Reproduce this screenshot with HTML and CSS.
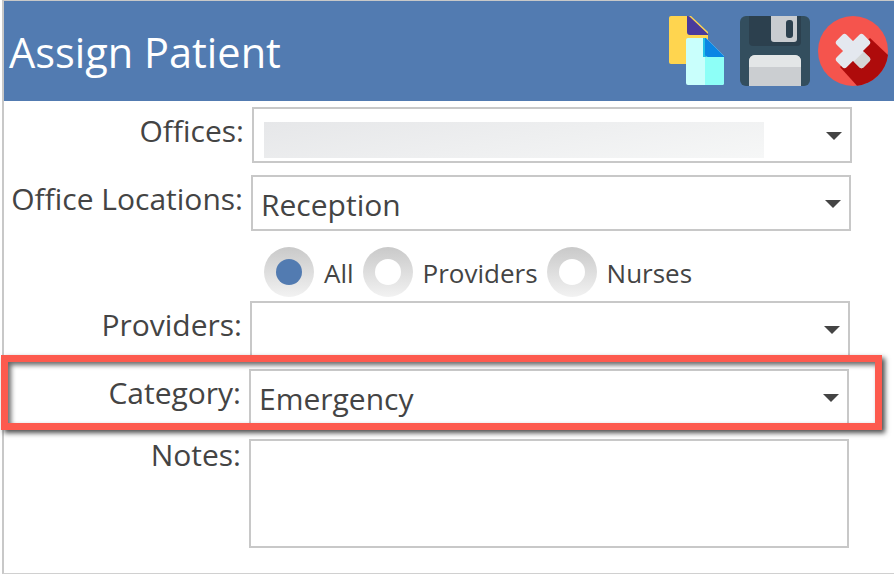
FILE: index.html
```html
<!DOCTYPE html>
<html lang="en">
<head>
<meta charset="utf-8">
<title>Assign Patient</title>
<link rel="stylesheet" href="styles.css">
</head>
<body>
<div class="dialog">
  <header class="titlebar">
    <h1 class="title">Assign Patient</h1>
    <div class="tools">
      <svg class="icon-copy" width="56" height="70" viewBox="0 0 56 70">
        <path d="M2 0H22L39 16V48H2a2 2 0 0 1-2-2V2a2 2 0 0 1 2-2Z" fill="#ffd54f"/>
        <path d="M18 0h1a3 3 0 0 1 2 1l18 17v1H21a3 3 0 0 1-3-3Z" fill="#4a3a9c"/>
        <path d="M19 22h18l18 18v27a2 2 0 0 1-2 2H19a2 2 0 0 1-2-2V24a2 2 0 0 1 2-2Z" fill="#c9fffc"/>
        <path d="M36 41h19v26a2 2 0 0 1-2 2H36Z" fill="#8dfff7"/>
        <path d="M34 22h3v19h-3Z" fill="#22bfe6"/>
        <path d="M36 22h1l18 18v1H39a3 3 0 0 1-3-3Z" fill="#0a86e4"/>
      </svg>
      <svg class="icon-save" width="70" height="70" viewBox="0 0 70 70">
        <rect width="70" height="70" rx="6" fill="#334e5e"/>
        <path d="M9 0H61V26a4 4 0 0 1-4 4H13a4 4 0 0 1-4-4Z" fill="#2c404e"/>
        <path d="M31 0H57V23a3 3 0 0 1-3 3H34a3 3 0 0 1-3-3Z" fill="#c9ccd0"/>
        <rect x="46" y="4" width="7" height="18" rx="3" fill="#2c404e"/>
        <path d="M9 70V45a6 6 0 0 1 6-6H55a6 6 0 0 1 6 6V70Z" fill="#cbced1"/>
        <path d="M9 51V45a6 6 0 0 1 6-6H55a6 6 0 0 1 6 6V51Z" fill="#e3e6e7"/>
      </svg>
      <svg class="icon-close" width="70" height="70" viewBox="0 0 70 70">
        <circle cx="35" cy="35" r="35" fill="#f5544d"/>
        <path d="M52 22 70 39A35 35 0 0 1 39 69.800L22 51Z" fill="#ae0b0b"/>
        <g transform="translate(35 35) rotate(45)">
          <rect x="-19" y="-7" width="38" height="14" rx="3" fill="#e4e8ef"/>
          <rect x="-7" y="-19" width="14" height="38" rx="3" fill="#e4e8ef"/>
          <path d="M8 -7H16a3 3 0 0 1 3 3V4a3 3 0 0 1-3 3H8Z" fill="#d4d6d6"/>
        </g>
      </svg>
    </div>
  </header>
  <div class="form">
    <div class="row row-offices">
      <label class="label">Offices:</label>
      <div class="select"><span class="blur"></span><span class="arrow"></span></div>
    </div>
    <div class="row row-locations">
      <label class="label">Office Locations:</label>
      <div class="select"><span class="value">Reception</span><span class="arrow"></span></div>
    </div>
    <div class="radios">
      <span class="radio radio-on"></span><span class="radio-text">All</span>
      <span class="radio"></span><span class="radio-text">Providers</span>
      <span class="radio"></span><span class="radio-text">Nurses</span>
    </div>
    <div class="row row-providers">
      <label class="label">Providers:</label>
      <div class="select"><span class="arrow"></span></div>
    </div>
    <div class="row row-category">
      <label class="label">Category:</label>
      <div class="select"><span class="value">Emergency</span><span class="arrow"></span></div>
    </div>
    <div class="row row-notes">
      <label class="label">Notes:</label>
      <div class="notes"></div>
    </div>
  </div>
  <div class="highlight"></div>
</div>
</body>
</html>
```

FILE: styles.css
```css
html, body {
  margin: 0;
  padding: 0;
  background: #fff;
}
body {
  width: 894px;
  height: 574px;
  overflow: hidden;
  font-family: "Open Sans", "Noto Sans", sans-serif;
  color: #444;
}
.dialog {
  position: relative;
  box-sizing: border-box;
  width: 894px;
  height: 574px;
  margin-left: 2px;
  border-left: 2px solid #c8c8c8;
  border-top: 1px solid #c8c8c8;
  border-bottom: 1px solid #d0d0d0;
}
.titlebar {
  display: flex;
  align-items: center;
  justify-content: space-between;
  height: 100px;
  background: #527bb1;
}
.title {
  margin: 2px 0 0 5px;
  font-size: 41.5px;
  font-weight: 400;
  color: #fff;
}
.tools {
  display: flex;
  align-items: center;
  gap: 15px;
  margin-right: 8px;
}
.icon-close { margin-left: -7px; }
.form {
  display: flex;
  flex-direction: column;
}
.row {
  display: flex;
  align-items: flex-start;
}
.label {
  box-sizing: border-box;
  padding-top: 6px;
  padding-right: 8px;
  text-align: right;
  font-size: 30px;
  line-height: 36px;
  white-space: nowrap;
}
.select {
  position: relative;
  box-sizing: border-box;
  width: 600px;
  height: 56px;
  border: 2px solid #c8c8c8;
  background: #fff;
}
.value {
  display: block;
  padding-left: 8px;
  font-size: 30px;
  line-height: 55px;
}
.arrow {
  position: absolute;
  right: 8px;
  top: 23px;
  width: 0;
  height: 0;
  border-left: 8px solid transparent;
  border-right: 8px solid transparent;
  border-top: 8px solid #444;
}
.blur {
  position: absolute;
  left: 10px;
  top: 13px;
  width: 500px;
  height: 36px;
  background: linear-gradient(170deg, #e6e7e9, #f6f7f7);
}
.row-offices { margin-top: 6px; }
.row-offices .label { width: 248px; }
.row-locations { margin-top: 12px; }
.row-locations .label { width: 247px; }
.radios {
  display: flex;
  align-items: center;
  margin: 16px 0 0 260px;
  height: 50px;
}
.radio {
  position: relative;
  width: 50px;
  height: 50px;
  border-radius: 50%;
  background: linear-gradient(180deg, #c9c9c9, #f2f2f2);
}
.radio::after {
  content: "";
  position: absolute;
  left: 12px;
  top: 12px;
  width: 26px;
  height: 26px;
  border-radius: 50%;
  background: #fff;
}
.radio-on::after { background: #527bb1; }
.radio-text {
  margin: 0 9px 0 10px;
  padding-top: 2px;
  font-size: 26px;
  line-height: 50px;
}
.row-providers { margin-top: 4px; }
.row-providers .label { width: 246px; }
.row-category { margin-top: 12px; }
.row-category .label { width: 245px; }
.row-notes { margin-top: 14px; }
.row-notes .label { width: 245px; padding-top: 0; line-height: 32px; }
.notes {
  box-sizing: border-box;
  width: 600px;
  height: 109px;
  border: 2px solid #c8c8c8;
}
.highlight {
  position: absolute;
  left: -3px;
  top: 354px;
  width: 867px;
  height: 61px;
  border: 7px solid #fd5a4e;
  box-shadow: 3px 3px 5px rgba(0,0,0,.7), inset 3px 3px 5px rgba(0,0,0,.6);
}
```
